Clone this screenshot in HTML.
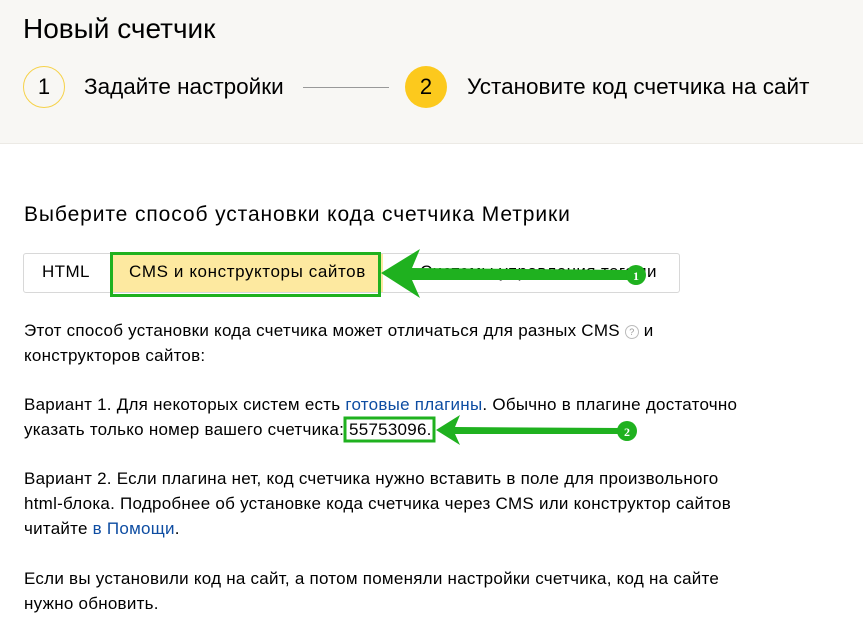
<!DOCTYPE html>
<html><head><meta charset="utf-8"><style>
body{margin:0;width:863px;height:622px;background:#fff;font-family:"Liberation Sans",sans-serif;color:#000;position:relative;overflow:hidden}
.hdr{position:absolute;left:0;top:0;width:863px;height:143px;background:#f8f7f4;border-bottom:1px solid #eceae5}
.a{position:absolute;white-space:nowrap}
.c{position:absolute;width:42px;height:42px;border-radius:50%;text-align:center;line-height:42px;font-size:22px;top:66px}
p{position:absolute;left:24px;margin:0;font-size:17px;letter-spacing:0.25px;line-height:25px;width:800px}
a{color:#0e4da2;text-decoration:none}
</style></head><body>
<div class="hdr"></div>
<div class="a" style="left:23px;top:13px;font-size:28px">Новый счетчик</div>
<div class="c" style="left:23px;border:1px solid #f6d24a;width:40px;height:40px;line-height:40px">1</div>
<div class="a" style="left:84px;top:74px;font-size:22.5px">Задайте настройки</div>
<div class="a" style="left:303px;top:87px;width:86px;height:1px;background:#999"></div>
<div class="c" style="left:405px;background:#fcc91d">2</div>
<div class="a" style="left:467px;top:74px;font-size:22.5px">Установите код счетчика на сайт</div>
<div class="a" style="left:24px;top:203px;font-size:21px;letter-spacing:0.9px">Выберите способ установки кода счетчика Метрики</div>
<div class="a" style="left:23px;top:253px;width:655px;height:38px;border:1px solid #d8d8d8;border-radius:3px"></div>
<div class="a" style="left:42px;top:262px;font-size:17px;letter-spacing:0.4px">HTML</div>
<div class="a" style="left:112px;top:254px;width:271px;height:38px;background:#fde9a0"></div>
<div class="a" style="left:110px;top:252px;width:265px;height:39px;border:3px solid #1fb11f"></div>
<div class="a" style="left:129px;top:262px;font-size:17px;letter-spacing:0.6px">CMS и конструкторы сайтов</div>
<div class="a" style="left:420px;top:262px;font-size:17px;letter-spacing:0.4px">Системы управления тегами</div>
<svg class="a" style="left:0;top:0" width="863" height="622">
<polygon points="381,273 420,249 412,268 630,270 630,280 412,280 420,298" fill="#1fb11f"/>
<circle cx="636" cy="275" r="10" fill="#1fb11f"/><text x="636" y="280" font-size="12" font-weight="bold" fill="#fff" text-anchor="middle" font-family="Liberation Serif">1</text>
</svg>
<p style="top:318px">Этот способ установки кода счетчика может отличаться для разных CMS <span style="display:inline-block;width:12px;height:12px;border:1px solid #bbb;border-radius:50%;font-size:9px;line-height:12px;text-align:center;color:#999;vertical-align:middle;letter-spacing:0">?</span> и<br>конструкторов сайтов:</p>
<p style="top:392px">Вариант 1. Для некоторых систем есть <a>готовые плагины</a>. Обычно в плагине достаточно<br>указать только номер вашего счетчика: 55753096.</p>
<p style="top:466px">Вариант 2. Если плагина нет, код счетчика нужно вставить в поле для произвольного<br>html-блока. Подробнее об установке кода счетчика через CMS или конструктор сайтов<br>читайте <a>в Помощи</a>.</p>
<p style="top:566px">Если вы установили код на сайт, а потом поменяли настройки счетчика, код на сайте<br>нужно обновить.</p>
<svg class="a" style="left:0;top:0" width="863" height="622">
<rect x="345" y="418" width="89" height="23" fill="none" stroke="#1fb11f" stroke-width="3"/>
<polygon points="436,430 460,415 455,427 622,428 622,434 455,434 460,445" fill="#1fb11f"/>
<circle cx="627" cy="431" r="10" fill="#1fb11f"/><text x="627" y="436" font-size="12" font-weight="bold" fill="#fff" text-anchor="middle" font-family="Liberation Serif">2</text>
</svg>
</body></html>
